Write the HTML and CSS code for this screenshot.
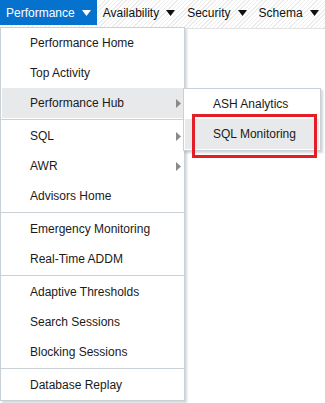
FILE: index.html
```html
<!DOCTYPE html>
<html>
<head>
<meta charset="utf-8">
<link rel="stylesheet" href="styles.css">
</head>
<body>
<div class="page">
  <nav class="bar">
    <div class="tab active">Performance <svg class="caret" width="9" height="6" viewBox="0 0 9 6"><path d="M0 0H9L4.5 6Z"/></svg></div>
    <div class="tab">Availability <svg class="caret" width="9" height="6" viewBox="0 0 9 6"><path d="M0 0H9L4.5 6Z"/></svg></div>
    <div class="tab">Security <svg class="caret" width="9" height="6" viewBox="0 0 9 6"><path d="M0 0H9L4.5 6Z"/></svg></div>
    <div class="tab">Schema <svg class="caret" width="9" height="6" viewBox="0 0 9 6"><path d="M0 0H9L4.5 6Z"/></svg></div>
  </nav>
  <div class="content"></div>

  <div class="menu">
    <div class="item">Performance Home</div>
    <div class="item">Top Activity</div>
    <div class="item hl">Performance Hub <svg class="sub" width="5" height="9" viewBox="0 0 5 9"><path d="M0 0L5 4.5L0 9Z"/></svg></div>
    <div class="sep"></div>
    <div class="item">SQL <svg class="sub" width="5" height="9" viewBox="0 0 5 9"><path d="M0 0L5 4.5L0 9Z"/></svg></div>
    <div class="item">AWR <svg class="sub" width="5" height="9" viewBox="0 0 5 9"><path d="M0 0L5 4.5L0 9Z"/></svg></div>
    <div class="item">Advisors Home</div>
    <div class="sep"></div>
    <div class="item">Emergency Monitoring</div>
    <div class="item">Real-Time ADDM</div>
    <div class="sep"></div>
    <div class="item">Adaptive Thresholds</div>
    <div class="item">Search Sessions</div>
    <div class="item">Blocking Sessions</div>
    <div class="sep"></div>
    <div class="item">Database Replay</div>
  </div>

  <div class="submenu">
    <div class="item">ASH Analytics</div>
    <div class="item hl">SQL Monitoring</div>
  </div>

  <div class="callout"></div>
</div>
</body>
</html>
```

FILE: styles.css
```css
html, body {
  margin: 0;
  padding: 0;
  background: #fff;
}
body {
  font-family: "Liberation Sans", Arial, sans-serif;
  font-size: 12px;
  color: #1a1a1a;
}
.page {
  position: relative;
  width: 325px;
  height: 403px;
  overflow: hidden;
}
.bar {
  display: flex;
  align-items: flex-start;
  height: 29px;
  box-sizing: border-box;
  border-bottom: 1px solid #e2e2e2;
  background: repeating-linear-gradient(135deg, #ffffff 0 2px, #ececec 2px 3px);
}
.tab {
  display: flex;
  align-items: center;
  gap: 7px;
  height: 25px;
  padding: 0 6px;
  color: #111;
  white-space: nowrap;
}
.tab .caret { fill: #111; }
.tab.active {
  background: #0572ce;
  color: #fff;
}
.tab.active .caret { fill: #fff; }

.menu {
  position: absolute;
  left: 0;
  top: 27px;
  width: 185px;
  box-sizing: border-box;
  background: #fff;
  border: 1px solid #c9d0d6;
  box-shadow: 2px 2px 2px rgba(0,0,0,0.16);
}
.item {
  position: relative;
  height: 30px;
  line-height: 30px;
  margin: 0 1px;
  padding-left: 28px;
  white-space: nowrap;
  color: #1a1a1a;
}
.item.hl { background: #e8e9eb; }
.item .sub {
  position: absolute;
  right: 2px;
  top: 11px;
  fill: #8a8a8a;
}
.sep {
  height: 0;
  margin: 1px 0;
  border-top: 1px solid #c9d0d6;
}
.submenu {
  position: absolute;
  left: 183px;
  top: 88px;
  width: 138px;
  box-sizing: border-box;
  background: #fff;
  border: 1px solid #c9d0d6;
  padding-bottom: 1px;
  box-shadow: 2px 2px 2px rgba(0,0,0,0.16);
}
.submenu .item { padding-left: 28px; }
.callout {
  position: absolute;
  left: 192px;
  top: 114px;
  width: 125px;
  height: 44px;
  box-sizing: border-box;
  border: 3px solid #e41e26;
}
```
